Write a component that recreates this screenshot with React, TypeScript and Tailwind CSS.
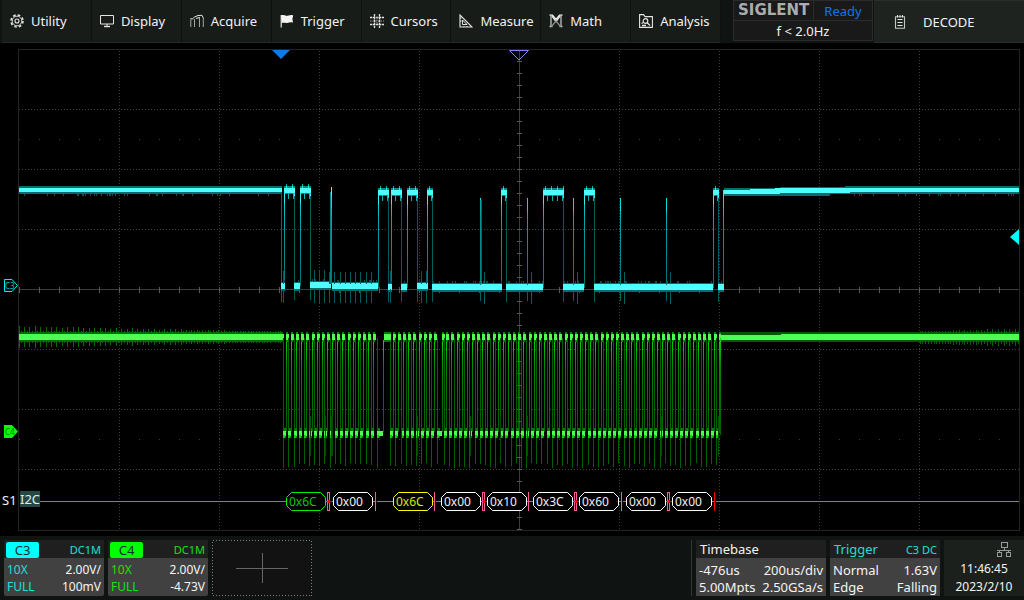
import type { ReactNode } from "react";

/* ---------- icons ---------- */

function Icon({ children }: { children: ReactNode }) {
  return (
    <svg
      viewBox="0 0 14 14"
      className="size-[14px] shrink-0"
      fill="none"
      stroke="#e4e4e4"
      strokeWidth="1"
      aria-hidden="true"
    >
      {children}
    </svg>
  );
}

const GearIcon = () => (
  <Icon>
    <circle cx="7" cy="7" r="6" strokeWidth="1.6" strokeDasharray="2.6 2.11" />
    <circle cx="7" cy="7" r="4.8" strokeWidth=".9" />
    <circle cx="7" cy="7" r="2" strokeWidth="1.1" />
  </Icon>
);
const DisplayIcon = () => (
  <Icon>
    <path d="M.5 1.5h13v8.5H.5zM7 10v2" />
    <path d="M4 12.500h6" strokeWidth="1.4" />
  </Icon>
);
const AcquireIcon = () => (
  <Icon>
    <path d="M.8 5.5V13M4.5 13V5M9.500 13V3M13.300 13V4" stroke="#a4a4a4" strokeWidth="1" />
    <path d="M.3 4.800H3.500M3.500 3.500 8 1.500 12 1.300 13.300 4M6 4.500 9.500 3.500" />
  </Icon>
);
const FlagIcon = () => (
  <Icon>
    <path d="M1.2 1v12.500" strokeWidth="1.2" />
    <path
      d="M1 1.5C3.5 0 6 2.5 8.5 1.6 10 1.1 11.5.8 13.2 1.5L12.4 4.8 13 8.6C11 8 9.5 8.2 8 8.8 5.5 9.4 3.5 8.2 1.8 9.2z"
      fill="#f4f4f4"
      stroke="none"
    />
  </Icon>
);
const CursorsIcon = () => (
  <Icon>
    <path d="M4.5 0v14M9.500 0v14M0 3.500h14M0 10.500h14" strokeWidth="1.3" strokeDasharray="2.4 .6" />
    <path d="M7 3v8M0 7h14" stroke="#999" strokeDasharray="1.6 1" />
  </Icon>
);
const MeasureIcon = () => (
  <Icon>
    <path d="M1 1v12h12z" strokeWidth="1.1" />
    <path d="M3.5 6v4.500h4.500z" />
    <path d="M1 4h1.500M1 7h1.500M5 13v-1M8 13v-1" />
  </Icon>
);
const MathIcon = () => (
  <Icon>
    <path d="M2 2v10.500M12 2v10.500M.5 12.500h3M10.500 12.500h3" stroke="#b4b4b4" strokeWidth="1.4" />
    <path d="M.5 1.200h3L7 5.500l3.500-4.300h3" stroke="#f4f4f4" strokeWidth="1.3" />
    <path d="M3 2 7 7.500 11 2" stroke="#e0e0e0" strokeWidth="1.4" />
    <path d="M2.500 12.500 7 7l4.500 5.500" stroke="#8c8c8c" strokeWidth="1.200" />
  </Icon>
);
const AnalysisIcon = () => (
  <Icon>
    <path d="M.6 13.400V.6h4l1.400 2h7.400v10.800z" strokeWidth="1.1" />
    <circle cx="6.5" cy="7" r="2.300" strokeWidth="1.2" />
    <path d="M8.2 8.800 11 11.500M2.500 9.500l1.700-1M3 11.500h4" strokeWidth="1.3" />
  </Icon>
);
const DecodeIcon = () => (
  <Icon>
    <path d="M2.500 1.800h9v11.500h-9z" stroke="#c4c4c4" strokeWidth="1.1" />
    <path d="M4.500 0v2.500M7 0v2.500M9.500 0v2.500" />
    <path d="M4.500 4.500h5M4.500 7.500h5M4.500 10.500h5" strokeWidth="1.2" />
  </Icon>
);

/* ---------- header ---------- */

const menu = [
  { label: "Utility", icon: <GearIcon /> },
  { label: "Display", icon: <DisplayIcon /> },
  { label: "Acquire", icon: <AcquireIcon /> },
  { label: "Trigger", icon: <FlagIcon /> },
  { label: "Cursors", icon: <CursorsIcon /> },
  { label: "Measure", icon: <MeasureIcon /> },
  { label: "Math", icon: <MathIcon /> },
  { label: "Analysis", icon: <AnalysisIcon /> },
];

function Header() {
  return (
    <header className="flex h-[43px] shrink-0 bg-[#0f1412] pl-[2px] text-[13px] leading-4 text-[#f2f2f2]">
      <nav className="grid flex-1 grid-cols-8 bg-[#181c19]">
        {menu.map((m) => (
          <button
            key={m.label}
            type="button"
            className="flex items-center gap-[7px] border-r border-b border-r-[#0d110f] border-b-[#262a27] pl-2"
          >
            {m.icon}
            {m.label}
          </button>
        ))}
      </nav>
      <div className="mr-px ml-3 flex h-[41px] w-[140px] flex-col border border-[#2b2b2b] bg-[#191919]">
        <div className="flex h-5 border-b border-[#2b2b2b]">
          <div className="flex w-20 items-center border-r border-[#2b2b2b] pb-[2px] pl-1 font-['DejaVu_Sans',sans-serif] text-[15px] font-bold text-[#a9adaf]">
            SIGLENT
          </div>
          <div className="flex flex-1 items-center justify-center text-[#0a78e6]">Ready</div>
        </div>
        <div className="flex flex-1 items-center justify-center">f &lt; 2.0Hz</div>
      </div>
      <button
        type="button"
        className="flex w-[150px] items-center gap-4 border-y border-[#2a2e2b] bg-[#1f2320] pl-[19px]"
      >
        <DecodeIcon />
        DECODE
      </button>
    </header>
  );
}

/* ---------- waveform data ---------- */

const noise = (n: number) => {
  const v = Math.sin(n * 12.9898 + 4.1) * 43758.5453;
  return v - Math.floor(v);
};
const range = (count: number) => Array.from({ length: count }, (_, i) => i);

// Data line: [start, end] of every high level between the idle stretches
const highs: [number, number][] = [
  [284, 295], [300, 311], [378, 389], [391, 402], [407, 418], [427, 433],
  [501, 507], [543, 564], [584, 595], [713, 719],
];
// Data line: [start, end, top] of every low level
const lows: [number, number, number][] = [
  [281, 285, 283], [294, 300, 283], [310, 331, 282], [332, 378, 283], [388, 392, 284],
  [401, 407, 284], [417, 428, 283], [432, 502, 284], [506, 543, 284], [563, 584, 284],
  [594, 713, 284], [718, 724, 284],
];
const glitches = [480, 527, 573, 620, 666];

function DataTrace() {
  return (
    <g shapeRendering="crispEdges">
      <path d="M19 186h263v8H19z" fill="#006d6d" />
      <path d="M19 188h263v4H19z" fill="#4fffff" />
      {range(34).map((i) => (
        <path key={i} d={`M${20 + Math.floor(noise(i) * 250)} 194h1v2h-1z`} fill="#005a5a" />
      ))}
      <path d="M281 192h1v110h-1z" fill="#006a6a" />
      {highs.map(([a, b], i) => {
        const y = i < 2 ? 188 : 190;
        return (
          <g key={a}>
            <path d={`M${a} ${y + 2}h1v96h-1z`} fill="url(#riseCyan)" />
            <path d={`M${b - 1} ${y + 2}h1v110h-1z`} fill="#005c5c" />
            <path d={`M${a} ${y - 2}h${b - a}v8h-${b - a}z`} fill="#008a8a" />
            <path d={`M${a} ${y}h${b - a}v5h-${b - a}z`} fill="#4fffff" />
            {range(Math.ceil((b - a) / 6)).map((k) => (
              <path key={k} d={`M${a + 2 + k * 6} ${y - 2}h1v2h-1z`} fill="#30e8e8" />
            ))}
            {range(Math.ceil((b - a) / 6)).map((k) => (
              <path
                key={k}
                d={`M${a + 2 + k * 6} ${y - 4}h1v2h-1zM${Math.min(a + 4 + k * 5, b - 1)} ${y + 5}h1v6h-1z`}
                fill="#00b4b4"
              />
            ))}
            <path d={`M${a} ${y + 4}h1v10h-1zM${b - 1} ${y + 4}h1v4h-1z`} fill="#30f0f0" />
          </g>
        );
      })}
      {lows.map(([a, b, y]) => (
        <g key={a}>
          <path d={`M${a} ${y - 1}h${b - a}v9h-${b - a}z`} fill="#006c6c" />
          <path d={`M${a} ${y}h${b - a}v6h-${b - a}z`} fill="#4fffff" />
          {range(Math.floor((b - a) / 4)).map((k) => (
            <path
              key={k}
              d={`M${a + Math.floor(noise(a + k) * (b - a))} ${y - 3}h1v2h-1z`}
              fill="#005050"
            />
          ))}
        </g>
      ))}
      <path d="M331 188h1v96h-1z" fill="url(#riseCyan)" />
      <path d="M330 192h1v92h-1z" fill="#008080" />
      <path d="M331 187h1v8h-1z" fill="#4fffff" />
      {glitches.map((x) => (
        <g key={x}>
          <path d={`M${x} 198h1v87h-1z`} fill="url(#riseCyan)" />
          <path d={`M${x} 199h1v12h-1z`} fill="#00dede" />
          <path
            d={`M${x} 291h1v10h-1zM${x + 4} 272h1v12h-1zM${x + 4} 291h1v13h-1z`}
            fill="#006060"
          />
        </g>
      ))}
      <path d="M480 200h2v84h-2z" fill="#008a8a" opacity=".7" />
      {range(12).map((i) => {
        const x = 314 + Math.floor(i * 5.2);
        return (
          <path key={i} d={`M${x} ${i < 3 ? 270 : 272}h1v12h-1zM${x} 289h1v14h-1z`} fill="#005c5c" />
        );
      })}
      {[283, 390, 421, 426].map((x) => (
        <path key={x} d={`M${x} 271h1v13h-1zM${x} 289h1v14h-1z`} fill="#005c5c" />
      ))}
      <path d="M723 190h1v94h-1z" fill="url(#riseCyan)" />
      <path d="M724 188H780V187H845V186H1019V194H830V196H724z" fill="#006d6d" />
      <path d="M724 190H750V189H775V188H1019V192H850V193H780V194H724z" fill="#4fffff" />
      {range(20).map((i) => (
        <path key={i} d={`M${840 + Math.floor(noise(i + 80) * 175)} 194h1v2h-1z`} fill="#005a5a" />
      ))}
    </g>
  );
}

const CLOCK = 5.14;
// Clock line: falling edge, low duration, and whether the next rise belongs to the pulse train
const clocks = [
  ...range(18).map((i) => ({ at: 283.3 + i * CLOCK, low: 3, rises: true })),
  { at: 377, low: 6, rises: false },
  ...range(9).map((i) => ({ at: 390.3 + i * CLOCK, low: 3, rises: true })),
  { at: 437, low: 5, rises: true },
  ...range(54).map((i) => ({ at: 443.7 + i * CLOCK, low: 3, rises: true })),
];

function ClockTrace() {
  return (
    <g shapeRendering="crispEdges">
      <path d="M19 332h264v10H19z" fill="#006a00" />
      {range(98).map((i) => {
        const x = 19 + Math.floor(i * 2.7);
        const amp = i % 2 ? 1 : Math.round(6 - i * 0.05 - noise(i));
        return <path key={i} d={`M${x} ${332 - amp}h1v${10 + amp * 2}h-1z`} fill="#006e00" />;
      })}
      <path d="M19 334h265v6H19z" fill="#4fff4f" />
      {clocks.map(({ at, low, rises }, i) => {
        const x = Math.round(at);
        const rise = Math.round(at + low - 0.4);
        const depth = 463 + Math.floor(noise(i + 7) * 6);
        return (
          <g key={i}>
            <path d={`M${x} 338h1V${depth}h-1z`} fill="#006000" />
            {rises && <path d={`M${rise} 338h1v94h-1z`} fill="url(#riseGreen)" />}
            <path d={`M${x + 1} 428h2v10h-2z`} fill="#008000" />
            <path d={`M${x} 431h${low}v5h-${low}z`} fill="#4fff4f" />
            <path d={`M${x} 435h2v3h-2z`} fill="#00d800" />
            {rises && (
              <>
                <path d={`M${rise} 332h2v10h-2z`} fill="#008a00" />
                <path d={`M${rise} 334h3v6h-3z`} fill="#4fff4f" />
              </>
            )}
          </g>
        );
      })}
      {[310, 325, 331, 332, 401, 417, 470, 500, 527, 661, 718].map((x) => (
        <path key={x} d={`M${x} 416h1v40h-1z`} fill="#004f00" />
      ))}
      <path d="M383 340h1v92h-1z" fill="url(#riseGreen)" />
      <path d="M384 332h7v10h-7z" fill="#007a00" />
      <path d="M384 334h7v6h-7z" fill="#4fff4f" />
      <path d="M720 338h1v97h-1z" fill="url(#riseGreen)" />
      <path d="M721 332h298v10H721z" fill="#005800" />
      <path d="M721 335H781V334H1019V340H721z" fill="#4fff4f" />
      {range(36).map((i) => {
        const x = 920 + Math.floor(i * 2.8);
        const amp = 1 + (i % 2 ? 0 : Math.floor(i / 12));
        return (
          <path
            key={i}
            d={`M${x} ${332 - amp}h1v${amp + 2}h-1zM${x} 340h1v${amp + 3}h-1z`}
            fill="#006400"
          />
        );
      })}
    </g>
  );
}

/* ---------- graticule ---------- */

function Graticule() {
  return (
    <g shapeRendering="crispEdges" fill="none">
      <rect x="18.5" y="49.5" width="1001" height="481" stroke="#242424" />
      <g stroke="#404040" strokeDasharray="1 2">
        {[119, 219, 319, 419, 619, 719, 819, 919].map((x) => (
          <path key={x} d={`M${x}.5 51V530`} />
        ))}
        {[109, 169, 229, 349, 409, 469].map((y) => (
          <path key={y} d={`M19 ${y}.5H1019`} />
        ))}
      </g>
      <path d="M19 139.5H1019M19 439.5H1019" stroke="#404040" strokeDasharray="1 19" />
      <path d="M19 289.5H1019M519.5 50V530" stroke="#3c3c3c" />
      <g stroke="#5a5a5a">
        {range(50).map((i) => (
          <path key={i} d={`M${19 + i * 20}.5 287v6`} />
        ))}
        {range(40).map((i) => (
          <path key={i} d={`M517 ${61 + i * 12}.5h5`} />
        ))}
      </g>
    </g>
  );
}

/* ---------- bus decode ---------- */

const frames = [
  { x: 286, text: "0x6C", color: "#00f000", ink: "#00c800" },
  { x: 333, text: "0x00", color: "#ffffff", ink: "#f0f0f0" },
  { x: 393, text: "0x6C", color: "#ffff00", ink: "#e0e000" },
  { x: 441, text: "0x00", color: "#ffffff", ink: "#f0f0f0" },
  { x: 487, text: "0x10", color: "#ffffff", ink: "#f0f0f0" },
  { x: 533, text: "0x3C", color: "#ffffff", ink: "#f0f0f0" },
  { x: 579, text: "0x60", color: "#ffffff", ink: "#f0f0f0" },
  { x: 626, text: "0x00", color: "#ffffff", ink: "#f0f0f0" },
  { x: 672, text: "0x00", color: "#ffffff", ink: "#f0f0f0" },
];

function BusDecode() {
  return (
    <g>
      <path
        d="M40 501.5H286M325 501.5h8M373 501.5h2M377 501.5h16M432 501.5h2M436 501.5h5M481 501.5h6M526 501.5h7M573 501.5h6M619 501.5h2M623 501.5h3M666 501.5h6M712 501.5h2M716 501.5H1019"
        stroke="#0fa5e6"
        shapeRendering="crispEdges"
      />
      {frames.map((f) => (
        <g key={f.x}>
          <path
            d={`M${f.x + 5.5} 492.5h29l5 5v8l-5 5h-29l-5-5v-8z`}
            fill="#000"
            stroke={f.color}
          />
          <text x={f.x + 3} y="506" fontSize="12" fill={f.ink}>
            {f.text}
          </text>
        </g>
      ))}
      <g shapeRendering="crispEdges" stroke="#ff5aa0" fill="none">
        {[327, 482, 574, 667].map((x) => (
          <g key={x}>
            <path d={`M${x}.5 492.5h2v18h-2z`} />
            <path d={`M${x} 501.5h5M${x + 1} 500.5h2M${x + 1} 502.5h2`} stroke="#ff0000" />
          </g>
        ))}
        <path d="M375.5 492v19M434.5 492v19M528.5 492v19M621.5 492v19" />
        <path d="M714.5 492v19" stroke="#ff0000" />
      </g>
      <text x="2" y="505" fontSize="13" fill="#f2f2f2">S1</text>
      <rect x="20" y="491" width="20" height="16" fill="#254845" />
      <text x="20" y="504" fontSize="13" fill="#e4ecea">I2C</text>
    </g>
  );
}

function Screen() {
  return (
    <svg
      viewBox="0 43 1024 493"
      className="block w-full bg-black"
      role="img"
      aria-label="Channel 3 and channel 4 waveforms with I2C decode"
    >
      <defs>
        <linearGradient id="riseCyan" gradientUnits="userSpaceOnUse" x1="0" y1="190" x2="0" y2="288">
          <stop offset="0" stopColor="#20ffff" />
          <stop offset=".3" stopColor="#00a8a8" />
          <stop offset="1" stopColor="#007070" />
        </linearGradient>
        <linearGradient id="riseGreen" gradientUnits="userSpaceOnUse" x1="0" y1="338" x2="0" y2="432">
          <stop offset="0" stopColor="#00e000" />
          <stop offset=".3" stopColor="#008800" />
          <stop offset="1" stopColor="#006000" />
        </linearGradient>
      </defs>
      <Graticule />
      <DataTrace />
      <ClockTrace />
      <BusDecode />
      <path d="M272 50h18l-9 9z" fill="#0f7be6" />
      <path d="M509.5 50.5h19l-9.5 9.5z" fill="none" stroke="#7f7fff" />
      <path d="M1019 229v16l-9-8z" fill="#00ffff" />
      <path d="M4.5 279.5h7.5l5.5 6-5.5 6h-7.5z" fill="#000" stroke="#00f0f0" />
      <text x="5" y="289" fontSize="8" fill="#00c0c0">C3</text>
      <path d="M4 425h8l6 6.5-6 6.5H4z" fill="#00ff00" />
      <text x="5" y="435" fontSize="8" fill="#007800">C4</text>
    </svg>
  );
}

/* ---------- footer ---------- */

function ChannelCard(props: { name: string; offset: string; tag: string; ink: string }) {
  return (
    <button
      type="button"
      className="flex w-[100px] flex-col rounded-[2px] bg-[#414141] text-left text-[12px] leading-[17px] text-[#f4f4f4]"
    >
      <span className="flex h-[18px] w-full shrink-0 bg-[#1f1f1f]">
        <span
          className={`mx-[2px] mt-[2px] flex h-4 w-[33px] items-center justify-center rounded-[2px] pt-px text-[13px] text-[#063030] ${props.tag}`}
        >
          {props.name}
        </span>
        <span className={`flex flex-1 items-center justify-end pr-[3px] text-[11px] ${props.ink}`}>
          DC1M
        </span>
      </span>
      <span className="flex w-full justify-between pt-[3px] pr-[3px] pl-[3px]">
        <span className={props.ink}>10X</span>
        <span>2.00V/</span>
      </span>
      <span className="flex w-full justify-between pr-[3px] pl-[3px]">
        <span className={props.ink}>FULL</span>
        <span>{props.offset}</span>
      </span>
    </button>
  );
}

function InfoCard(props: { title: ReactNode; width: string; rows: [string, string][] }) {
  return (
    <button
      type="button"
      className={`flex flex-col bg-[#414141] text-left text-[13px] leading-[17px] text-[#f4f4f4] ${props.width}`}
    >
      <span className="flex h-[18px] w-full shrink-0 items-center justify-between bg-[#1f1f1f] pt-px pr-[3px] pl-1">
        {props.title}
      </span>
      <span className="flex w-full flex-col pt-1">
        {props.rows.map(([a, b]) => (
          <span key={a} className="flex justify-between pr-[3px] pl-[3px]">
            <span>{a}</span>
            <span>{b}</span>
          </span>
        ))}
      </span>
    </button>
  );
}

function Footer() {
  return (
    <footer className="flex flex-1 bg-[#0f1412] pt-1 pl-1">
      <div className="flex h-14 w-full gap-1">
        <ChannelCard name="C3" offset="100mV" tag="bg-[#00ffff]" ink="text-[#17e0dc]" />
        <ChannelCard name="C4" offset="-4.73V" tag="bg-[#00ff00]" ink="text-[#14e014]" />
        <button
          type="button"
          aria-label="Add channel"
          className="flex w-[100px] items-center justify-center bg-[#121212]"
        >
          <svg
            viewBox="0 0 100 56"
            className="h-14 w-[100px]"
            fill="none"
            shapeRendering="crispEdges"
            aria-hidden="true"
          >
            <path d="M.5.5h99v55H.5z" stroke="#808080" strokeDasharray="1 2" />
            <path d="M24 28.5h52M50.5 13v30" stroke="#666" />
          </svg>
        </button>
        <div className="ml-auto w-px bg-[#303432]" />
        <div className="flex gap-1">
          <InfoCard
            width="w-[130px]"
            title="Timebase"
            rows={[["-476us", "200us/div"], ["5.00Mpts", "2.50GSa/s"]]}
          />
          <InfoCard
            width="w-[110px]"
            title={
              <>
                <span className="text-[#17e0dc]">Trigger</span>
                <span className="text-[11px] text-[#17e0dc]">C3 DC</span>
              </>
            }
            rows={[["Normal", "1.63V"], ["Edge", "Falling"]]}
          />
          <div className="flex w-20 flex-col items-center bg-[#1c201d] text-[12px] leading-[18px] text-[#f4f4f4]">
            <svg
              viewBox="0 0 16 16"
              className="mt-[2px] mr-3 size-4 shrink-0 self-end"
              fill="none"
              stroke="#9a9a9a"
              shapeRendering="crispEdges"
              role="img"
              aria-label="Network connected"
            >
              <path d="M5.5.5h6v5h-6zM8.5 5.5v3M1 8.5h14M3.5 8.5v2M12.5 8.5v2M1.5 10.5h4v4h-4zM10.5 10.5h4v4h-4z" />
            </svg>
            <time className="mt-[2px]">11:46:45</time>
            <span>2023/2/10</span>
          </div>
        </div>
      </div>
    </footer>
  );
}

export default function App() {
  return (
    <div className="flex min-h-screen flex-col bg-black font-['Noto_Sans',sans-serif]">
      <Header />
      <main>
        <Screen />
      </main>
      <Footer />
    </div>
  );
}
